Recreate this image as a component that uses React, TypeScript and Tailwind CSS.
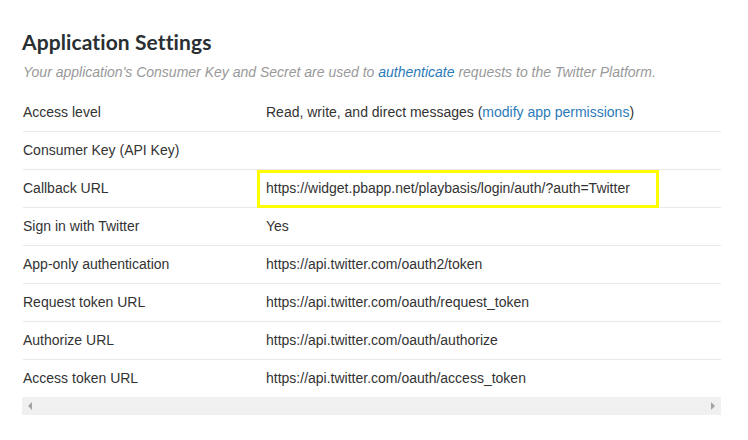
import React from "react";

const rows: { label: string; value: React.ReactNode; highlight?: boolean }[] = [
  {
    label: "Access level",
    value: (
      <>
        Read, write, and direct messages (
        <a className="text-[#2b7bb9]">modify app permissions</a>)
      </>
    ),
  },
  { label: "Consumer Key (API Key)", value: "" },
  {
    label: "Callback URL",
    value: "https://widget.pbapp.net/playbasis/login/auth/?auth=Twitter",
    highlight: true,
  },
  { label: "Sign in with Twitter", value: "Yes" },
  { label: "App-only authentication", value: "https://api.twitter.com/oauth2/token" },
  { label: "Request token URL", value: "https://api.twitter.com/oauth/request_token" },
  { label: "Authorize URL", value: "https://api.twitter.com/oauth/authorize" },
  { label: "Access token URL", value: "https://api.twitter.com/oauth/access_token" },
];

export default function App() {
  return (
    <div className="w-[748px] h-[440px] bg-white font-['Liberation_Sans',Arial,sans-serif] text-[#333333] overflow-hidden">
      <div className="pt-[29px] pl-[22px]">
        <h1 className="font-['Lato',sans-serif] font-bold text-[21px] leading-[26px] text-[#292f33] tracking-[0.1px]">
          Application Settings
        </h1>
        <p className="mt-[9px] pl-px italic text-[14px] leading-[17px] text-[#999999]">
          Your application's Consumer Key and Secret are used to{" "}
          <a className="text-[#2b7bb9]">authenticate</a> requests to the Twitter Platform.
        </p>
        <div className="mt-[12px] ml-px w-[698px]">
          {rows.map((r, i) => (
            <div
              key={r.label}
              className={`flex items-center h-[38px] text-[14px] ${i > 0 ? "border-t border-[#e8e8e8]" : ""}`}
            >
              <div className="w-[243px] shrink-0">{r.label}</div>
              <div className="relative flex-1 h-full flex items-center">
                {r.highlight && (
                  <div className="absolute left-[-9px] top-0 w-[402px] h-[38px] border-[3px] border-[#ffff00]" />
                )}
                <span className="relative">{r.value}</span>
              </div>
            </div>
          ))}
        </div>
        <div className="w-[699px] h-[18px] bg-[#f0f0f0] flex items-center justify-between px-[6px]">
          <svg width="4" height="8" viewBox="0 0 4 8">
            <path d="M4 0 L0 4 L4 8 Z" fill="#a3a3a3" />
          </svg>
          <svg width="4" height="8" viewBox="0 0 4 8">
            <path d="M0 0 L4 4 L0 8 Z" fill="#a3a3a3" />
          </svg>
        </div>
      </div>
    </div>
  );
}
